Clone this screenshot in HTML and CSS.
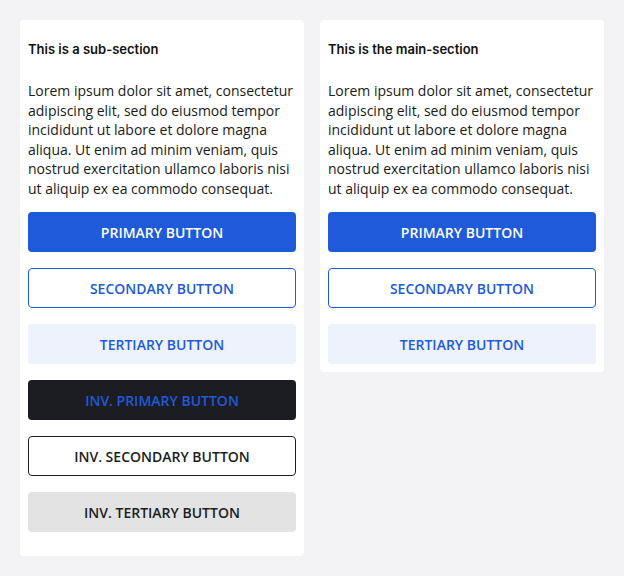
FILE: index.html
```html
<!DOCTYPE html>
<html lang="en">
<head>
<meta charset="utf-8">
<title>Buttons</title>
<link rel="stylesheet" href="styles.css">
</head>
<body>
<div class="page">
  <section class="card card-sub">
    <h2 class="card-title">This is a sub-section</h2>
    <p class="card-text">Lorem ipsum dolor sit amet, consectetur adipiscing elit, sed do eiusmod tempor incididunt ut labore et dolore magna aliqua. Ut enim ad minim veniam, quis nostrud exercitation ullamco laboris nisi ut aliquip ex ea commodo consequat.</p>
    <div class="buttons">
      <button class="btn btn-primary">Primary Button</button>
      <button class="btn btn-secondary">Secondary Button</button>
      <button class="btn btn-tertiary">Tertiary Button</button>
      <button class="btn btn-inv-primary">Inv. Primary Button</button>
      <button class="btn btn-inv-secondary">Inv. Secondary Button</button>
      <button class="btn btn-inv-tertiary">Inv. Tertiary Button</button>
    </div>
  </section>
  <section class="card card-main">
    <h2 class="card-title">This is the main-section</h2>
    <p class="card-text">Lorem ipsum dolor sit amet, consectetur adipiscing elit, sed do eiusmod tempor incididunt ut labore et dolore magna aliqua. Ut enim ad minim veniam, quis nostrud exercitation ullamco laboris nisi ut aliquip ex ea commodo consequat.</p>
    <div class="buttons">
      <button class="btn btn-primary">Primary Button</button>
      <button class="btn btn-secondary">Secondary Button</button>
      <button class="btn btn-tertiary">Tertiary Button</button>
    </div>
  </section>
</div>
</body>
</html>
```

FILE: styles.css
```css
* { box-sizing: border-box; }
html, body { margin: 0; padding: 0; }
body {
  background: #f3f3f5;
  font-family: "Open Sans", "Liberation Sans", sans-serif;
  color: #1a1a1a;
}
.page {
  display: flex;
  align-items: flex-start;
  gap: 16px;
  padding: 20px;
}
.card {
  width: 284px;
  background: #ffffff;
  border-radius: 4px;
  padding: 8px 8px 8px;
}
.card-sub { padding-bottom: 24px; }
.card-title {
  margin: 13px 0 0;
  font-family: Inter, "Liberation Sans", sans-serif;
  font-size: 13px;
  font-weight: 600;
  line-height: 16px;
  color: #111111;
}
.card-text {
  margin: 24px 0 13px;
  font-size: 14px;
  line-height: 1.4;
  color: #1a1a1a;
}
.buttons {
  display: flex;
  flex-direction: column;
  gap: 16px;
}
.btn {
  display: block;
  width: 100%;
  height: 40px;
  border-radius: 4px;
  border: 1px solid transparent;
  font-family: "Open Sans", "Liberation Sans", sans-serif;
  font-size: 14px;
  font-weight: 600;
  text-transform: uppercase;
  letter-spacing: 0;
  padding: 2px 12px 0;
  cursor: pointer;
}
.btn-primary { background: #1e5ad9; color: #ffffff; }
.btn-secondary { background: #ffffff; color: #1e5ad9; border-color: #1e5ad9; }
.btn-tertiary { background: #edf2fc; color: #1e5ad9; }
.btn-inv-primary { background: #1c1d22; color: #1e5ad9; }
.btn-inv-secondary { background: #ffffff; color: #1c1d22; border-color: #1c1d22; }
.btn-inv-tertiary { background: #e3e3e3; color: #1c1d22; }
```
